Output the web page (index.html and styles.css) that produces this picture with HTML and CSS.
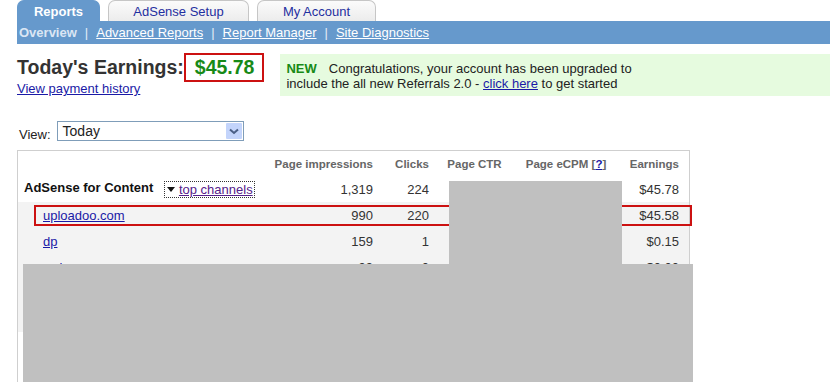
FILE: index.html
```html
<!DOCTYPE html>
<html>
<head>
  <title>AdSense - Reports</title>
  <link rel="stylesheet" href="styles.css">
</head>
<body>
  <div class="tabs">
    <div class="tab active tab-reports">Reports</div>
    <div class="tab tab-setup">AdSense Setup</div>
    <div class="tab tab-account">My Account</div>
  </div>
  <div class="subnav">
    <b class="current">Overview</b><span class="sep">|</span>
    <a href="#">Advanced Reports</a><span class="sep">|</span>
    <a href="#">Report Manager</a><span class="sep">|</span>
    <a href="#">Site Diagnostics</a>
  </div>

  <div class="summary">
    <div class="earnings">
      <h1>Today's Earnings:<span class="amount">$45.78</span></h1>
      <a href="#">View payment history</a>
    </div>
    <div class="notice">
      <b>NEW</b>Congratulations, your account has been upgraded to<br>
      include the all new Referrals 2.0 - <a href="#">click here</a> to get started
    </div>
  </div>

  <div class="view-row">
    <span class="view-label">View:</span>
    <div class="select">
      <span>Today</span>
      <span class="arrow">
        <svg width="10" height="7" viewBox="0 0 10 7"><path d="M1 1.5 L5 5 L9 1.5" fill="none" stroke="#4a5f86" stroke-width="2"/></svg>
      </span>
    </div>
  </div>

  <div class="report">
    <div class="row head">
      <div></div>
      <div class="num">Page impressions</div>
      <div class="num">Clicks</div>
      <div class="mid">Page CTR</div>
      <div class="mid">Page eCPM [<a href="#">?</a>]</div>
      <div class="num">Earnings</div>
    </div>
    <div class="row total">
      <div class="name"><b>AdSense for Content</b>
        <span class="channels"><span class="tri"></span><a href="#">top channels</a></span>
      </div>
      <div class="num">1,319</div>
      <div class="num">224</div>
      <div></div>
      <div></div>
      <div class="num">$45.78</div>
    </div>
    <div class="row sub">
      <div class="name"><a href="#">uploadoo.com</a></div>
      <div class="num">990</div>
      <div class="num">220</div>
      <div></div>
      <div></div>
      <div class="num">$45.58</div>
    </div>
    <div class="row sub">
      <div class="name"><a href="#">dp</a></div>
      <div class="num">159</div>
      <div class="num">1</div>
      <div></div>
      <div></div>
      <div class="num">$0.15</div>
    </div>
    <div class="row sub">
      <div class="name"><a href="#">web</a></div>
      <div class="num">99</div>
      <div class="num">0</div>
      <div></div>
      <div></div>
      <div class="num">$0.00</div>
    </div>
    <div class="row sub"></div>
    <div class="row sub"></div>

    <!-- annotation + redactions drawn over the table -->
    <div class="highlight"></div>
    <div class="redact redact-cols"></div>
    <div class="redact redact-rest"></div>
  </div>
</body>
</html>
```

FILE: styles.css
```css
body {
  margin: 0;
  font-family: "Liberation Sans", Arial, sans-serif;
  font-size: 13px;
  color: #222;
  background: #fff;
  overflow: hidden;
}
a {
  color: #1a1aa6;
}

/* top tabs */
.tabs {
  display: flex;
  gap: 8px;
  margin-left: 17px;
  height: 21px;
}
.tab {
  box-sizing: border-box;
  height: 21px;
  border: 1px solid #c6c6c6;
  border-bottom: none;
  border-radius: 7px 7px 0 0;
  background: linear-gradient(#fbfbfb, #ececec);
  color: #1f2fa0;
  text-align: center;
  line-height: 21px;
}
.tab.active {
  background: #6699cc;
  border-color: #6699cc;
  color: #fff;
  font-weight: bold;
}
.tab-reports { width: 83px; }
.tab-setup { width: 141px; }
.tab-account { width: 119px; }

.subnav {
  display: flex;
  align-items: center;
  height: 23px;
  margin-left: 17px;
  padding-left: 2px;
  background: #6699cc;
  color: #fff;
}
.subnav .current {
  color: #dbe6f4;
}
.subnav a {
  color: #fff;
}
.sep {
  margin: 0 8px;
  color: #e4ecf6;
}

/* earnings + notice */
.summary {
  display: flex;
  margin: 9px 0 0 17px;
}
.earnings h1 {
  display: flex;
  align-items: center;
  margin: 0;
  font-size: 19.5px;
  color: #333;
}
.amount {
  padding: 2px 8px 2px 9px;
  border: 2px solid #cc1111;
  color: #178a17;
  line-height: 21px;
}
.earnings a {
  display: block;
  margin-top: -1px;
}
.notice {
  flex: 1;
  margin: 1px 0 0 16px;
  padding: 7px 6px 5px 6px;
  background: #e6fbdf;
  line-height: 15px;
  color: #222;
}
.notice b {
  color: #178a17;
  margin-right: 12px;
}

/* view selector */
.view-row {
  display: flex;
  align-items: flex-end;
  margin: 25px 0 0 19px;
}
.view-label {
  margin-right: 6px;
  line-height: 13px;
}
.select {
  box-sizing: border-box;
  display: flex;
  align-items: center;
  justify-content: space-between;
  width: 187px;
  height: 20px;
  padding-left: 5px;
  border: 1px solid #7f9db9;
  font-size: 14px;
}
.arrow {
  display: flex;
  align-items: center;
  justify-content: center;
  width: 16px;
  height: 16px;
  margin-right: 1px;
  background: #c3d4fb;
  border-radius: 1px;
}

/* report table */
.report {
  position: relative;
  box-sizing: border-box;
  width: 673px;
  height: 240px;
  margin: 9px 0 0 17px;
  border: 1px solid #cfcfcf;
  border-bottom: none;
}
.row {
  display: grid;
  grid-template-columns: 239px 110px 56px 91px 92px 67px;
  align-items: center;
  height: 26px;
  padding-left: 6px;
  color: #333;
}
.row.head {
  height: 25px;
  font-size: 11.5px;
  font-weight: bold;
  color: #666;
}
.row.sub {
  background: #f3f3f3;
}
.num {
  text-align: right;
}
.mid {
  text-align: center;
}
.row.total .name b {
  color: #111;
}
.row.sub .name {
  padding-left: 19px;
}
.channels {
  display: inline-flex;
  align-items: center;
  margin-left: 7px;
  padding: 0 1px 0 2px;
  border: 1px dotted #333;
  line-height: 15px;
}
.channels a {
  color: #55208a;
}
.tri {
  width: 0;
  height: 0;
  margin-right: 4px;
  border-left: 4px solid transparent;
  border-right: 4px solid transparent;
  border-top: 5px solid #111;
}

.highlight {
  position: absolute;
  left: 16px;
  top: 54px;
  width: 658px;
  height: 21px;
  box-sizing: border-box;
  border: 2px solid #cc1111;
}
.redact {
  position: absolute;
  background: #c0c0c0;
}
.redact-cols {
  left: 431px;
  top: 30px;
  width: 173px;
  height: 84px;
}
.redact-rest {
  left: 5px;
  top: 113px;
  width: 670px;
  height: 150px;
}
```
